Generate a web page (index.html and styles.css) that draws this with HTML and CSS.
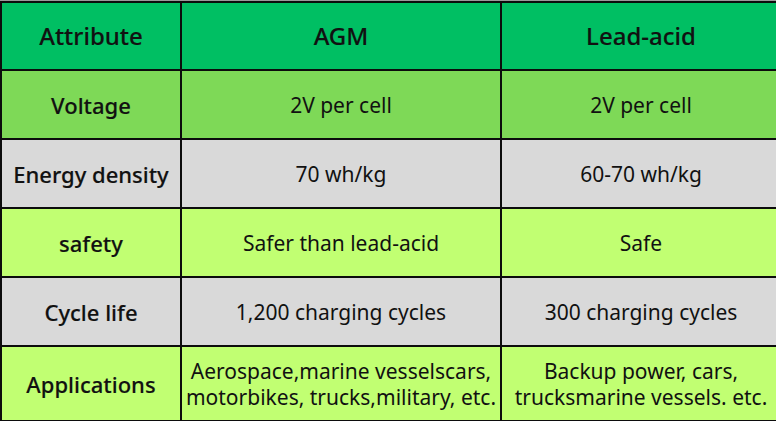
FILE: index.html
```html
<!DOCTYPE html>
<html>
<head>
<meta charset="utf-8">
<link rel="stylesheet" href="styles.css">
</head>
<body>
<table class="cmp">
  <colgroup>
    <col class="c1"><col class="c2"><col class="c3">
  </colgroup>
  <thead>
    <tr class="head">
      <th>Attribute</th><th>AGM</th><th>Lead-acid</th>
    </tr>
  </thead>
  <tbody>
    <tr class="r-mid">
      <th>Voltage</th><td>2V per cell</td><td>2V per cell</td>
    </tr>
    <tr class="r-gray">
      <th>Energy density</th><td>70 wh/kg</td><td>60-70 wh/kg</td>
    </tr>
    <tr class="r-lime">
      <th>safety</th><td>Safer than lead-acid</td><td>Safe</td>
    </tr>
    <tr class="r-gray">
      <th>Cycle life</th><td>1,200 charging cycles</td><td>300 charging cycles</td>
    </tr>
    <tr class="r-lime last">
      <th>Applications</th><td>Aerospace,marine vesselscars,<br>motorbikes, trucks,military, etc.</td><td>Backup power, cars,<br>trucksmarine vessels. etc.</td>
    </tr>
  </tbody>
</table>
</body>
</html>
```

FILE: styles.css
```css
html, body {
  margin: 0;
  padding: 0;
  background: #ffffff;
}
body {
  border-top: 1px solid #9a9a9a;
  overflow: hidden;
  width: 776px;
  height: 420px;
}
.cmp {
  border-collapse: collapse;
  width: 780px;
  table-layout: fixed;
  font-family: "Noto Sans", "Liberation Sans", sans-serif;
  font-size: 21px;
  color: #111111;
}
.c1 { width: 180px; }
.c2 { width: 320px; }
.c3 { width: 280px; }
.cmp th, .cmp td {
  border: 2px solid #0c0c0c;
  text-align: center;
  vertical-align: middle;
  padding: 0 2px;
  height: 67px;
  line-height: 26px;
  white-space: nowrap;
}
.cmp th {
  font-size: 22px;
  font-weight: 500;
  -webkit-text-stroke: 0.15px #111111;
}
.cmp td {
  font-weight: 400;
}
.head th {
  font-size: 24px;
  background: #00bf63;
  height: 66px;
}
.r-mid th, .r-mid td { background: #7ed957; }
.r-gray th, .r-gray td { background: #d9d9d9; }
.r-lime th, .r-lime td { background: #c1ff72; }
.last th, .last td { height: 73px; }
```
